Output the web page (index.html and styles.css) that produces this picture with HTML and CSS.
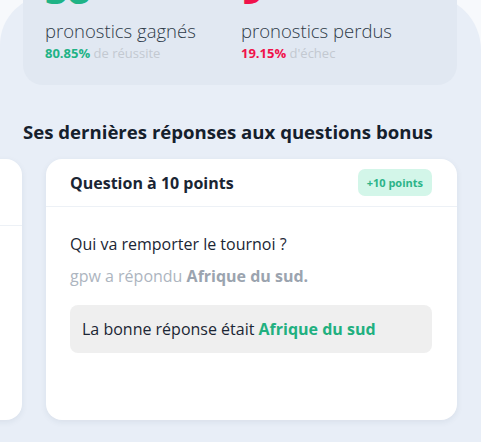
FILE: index.html
```html
<!DOCTYPE html>
<html lang="fr">
<head>
<meta charset="utf-8">
<title>Statistiques</title>
<link rel="stylesheet" href="styles.css">
</head>
<body>
<main class="panel">
  <section class="stats">
    <div class="stat">
      <div class="stat-num win">38</div>
      <div class="stat-label">pronostics gagnés</div>
      <div class="stat-sub"><strong class="win">80.85%</strong> de réussite</div>
    </div>
    <div class="stat">
      <div class="stat-num loss">9</div>
      <div class="stat-label">pronostics perdus</div>
      <div class="stat-sub"><strong class="loss">19.15%</strong> d'échec</div>
    </div>
  </section>

  <h2 class="section-title">Ses dernières réponses aux questions bonus</h2>

  <div class="track">
    <article class="card">
      <header class="card-head card-head--tall">
        <h3 class="card-title">Question à 5 points<br>phase de groupes</h3>
        <span class="badge">+5 points</span>
      </header>
      <div class="card-body">
        <p class="question">Qui sera le meilleur buteur ?</p>
        <p class="answer">gpw a répondu <strong>Mbappé.</strong></p>
      </div>
    </article>
    <article class="card">
      <header class="card-head">
        <h3 class="card-title">Question à 10 points</h3>
        <span class="badge">+10 points</span>
      </header>
      <div class="card-body">
        <p class="question">Qui va remporter le tournoi ?</p>
        <p class="answer">gpw a répondu <strong>Afrique du sud.</strong></p>
        <div class="solution">La bonne réponse était <strong>Afrique du sud</strong></div>
      </div>
    </article>
  </div>
</main>
</body>
</html>
```

FILE: styles.css
```css
* { box-sizing: border-box; }

html, body {
  margin: 0;
  padding: 0;
}

body {
  background: #f7f9fc;
  font-family: "Open Sans", "Noto Sans", sans-serif;
  color: #1b2634;
  overflow: hidden;
  height: 442px;
}

.panel {
  display: flow-root;
  margin-top: -5px;
  height: 447px;
  background: #e8eef7;
  border-radius: 50px 55px 0 0;
  padding: 0 24px 0 23px;
}

.stats {
  margin-top: -26px;
  background: #e1e8f2;
  border-radius: 20px;
  padding: 0 22px 23px 22px;
  display: grid;
  grid-template-columns: 196px 1fr;
}

.stat-num {
  font-size: 40px;
  font-weight: 700;
  line-height: 40px;
}

.win { color: #1fb386; }
.loss { color: #f0124b; }

.stat-label {
  margin-top: 10px;
  font-size: 18.5px;
  font-weight: 300;
  line-height: 24px;
  color: #2e3a48;
}

.stat-sub {
  margin-top: 1px;
  font-size: 13px;
  line-height: 18px;
  color: #c3c9d1;
}

.stat-sub strong { font-weight: 700; }

.section-title {
  margin: 34px 0 14px;
  font-size: 18.6px;
  line-height: 26px;
  font-weight: 700;
  color: #15202c;
}

.track {
  display: flex;
  gap: 24px;
  margin-left: -412px;
  align-items: stretch;
}

.card {
  flex: 0 0 411px;
  background: #ffffff;
  border-radius: 16px;
  box-shadow: 0 2px 6px rgba(40, 60, 90, 0.08);
}

.card-head {
  display: flex;
  align-items: center;
  justify-content: space-between;
  padding: 10px 25px 10px 24px;
  border-bottom: 1px solid #edf1f6;
}

.card-head--tall {
  padding-top: 11px;
  padding-bottom: 11px;
}

.card-title {
  margin: 0;
  font-size: 16px;
  line-height: 22px;
  font-weight: 700;
  color: #1a2533;
}

.badge {
  display: inline-flex;
  align-items: center;
  height: 27px;
  padding: 0 9px;
  border-radius: 7px;
  background: #d3f6e9;
  color: #2bb488;
  font-size: 11px;
  font-weight: 700;
}

.card-body {
  padding: 25px 25px 67px 24px;
}

.question {
  margin: 0;
  font-size: 16px;
  line-height: 24px;
  color: #1b2634;
}

.answer {
  margin: 8px 0 0;
  font-size: 16px;
  line-height: 24px;
  color: #adb5c0;
}

.answer strong {
  color: #9ba4af;
  font-weight: 700;
}

.solution {
  margin-top: 17px;
  padding: 12px 12px;
  border-radius: 8px;
  background: #efefef;
  font-size: 16px;
  line-height: 24px;
  color: #1b2634;
}

.solution strong {
  color: #21b07f;
  font-weight: 700;
}
```
